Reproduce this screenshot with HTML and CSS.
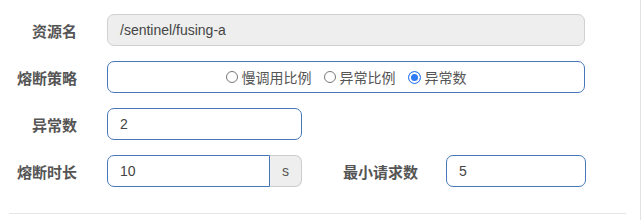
FILE: index.html
```html
<!DOCTYPE html>
<html lang="zh-CN">

<head>
  <meta charset="UTF-8" />
  <title>熔断规则</title>
  <link rel="stylesheet" href="styles.css">
</head>

<body>
  <div class="panel">
    <form class="rule-form">
      <div class="form-row">
        <label class="form-label">资源名</label>
        <div class="form-control disabled wide">/sentinel/fusing-a</div>
      </div>

      <div class="form-row">
        <label class="form-label">熔断策略</label>
        <div class="form-control focus wide radio-group">
          <span class="radio-item"><span class="radio"></span>慢调用比例</span>
          <span class="radio-item"><span class="radio"></span>异常比例</span>
          <span class="radio-item"><span class="radio checked"></span>异常数</span>
        </div>
      </div>

      <div class="form-row">
        <label class="form-label">异常数</label>
        <div class="form-control focus half">2</div>
      </div>

      <div class="form-row last">
        <label class="form-label">熔断时长</label>
        <div class="input-group half">
          <div class="form-control focus group-input">10</div>
          <span class="addon">s</span>
        </div>
        <label class="form-label second">最小请求数</label>
        <div class="form-control focus short">5</div>
      </div>
    </form>
    <hr class="divider" />
  </div>
</body>

</html>
```

FILE: styles.css
```css
/* Base */
* {
  box-sizing: border-box;
  margin: 0;
  padding: 0;
}

body {
  font-family: 'Liberation Sans', Arial, 'Noto Sans CJK SC', sans-serif;
  font-size: 14px;
  color: #555;
  background-color: #fff;
  width: 644px;
  height: 220px;
  overflow: hidden;
}

.panel {
  width: 641px;
  height: 220px;
  border-right: 1px solid #e2e2e2;
  padding-top: 14px;
}

/* Form rows */
.form-row {
  display: flex;
  align-items: center;
  margin-bottom: 15px;
}

.form-row.last {
  margin-bottom: 0;
}

.form-label {
  width: 77px;
  margin-right: 30px;
  text-align: right;
  font-family: 'Noto Sans CJK SC', sans-serif;
  font-size: 15px;
  font-weight: 700;
  color: #555;
}

.form-label.second {
  width: 116px;
  margin-right: 28px;
}

.form-control {
  height: 32px;
  line-height: 30px;
  padding: 0 12px;
  border: 1px solid #ccc;
  border-radius: 7px;
  color: #444;
  background-color: #fff;
}

.form-control.disabled {
  background-color: #eee;
  border-color: #d0d0d0;
}

.form-control.focus {
  border-color: #4677b8;
}

.wide {
  width: 478px;
}

.half {
  width: 195px;
}

.short {
  width: 140px;
}

/* Radios */
.radio-group {
  display: flex;
  justify-content: center;
  align-items: center;
  font-family: 'Noto Sans CJK SC', sans-serif;
  font-size: 14px;
  color: #555;
}

.radio-item {
  display: inline-flex;
  align-items: center;
  margin: 0 6px;
}

.radio {
  width: 12px;
  height: 12px;
  border: 1px solid #777;
  border-radius: 50%;
  margin-right: 4px;
  background-color: #fff;
}

.radio.checked {
  width: 13px;
  height: 13px;
  border: 1px solid #2f7cf6;
  box-shadow: inset 0 0 0 2px #fff;
  background-color: #2f7cf6;
}

/* Input group */
.input-group {
  display: flex;
}

.group-input {
  flex: 1;
  border-radius: 7px 0 0 7px;
}

.addon {
  width: 32px;
  height: 32px;
  line-height: 30px;
  text-align: center;
  background-color: #eee;
  border: 1px solid #ccc;
  border-left: none;
  border-radius: 0 7px 7px 0;
  color: #555;
}

/* Divider */
.divider {
  margin: 26px 0 0 9px;
  width: 617px;
  border: none;
  border-top: 1px solid #e5e5e5;
}
```
